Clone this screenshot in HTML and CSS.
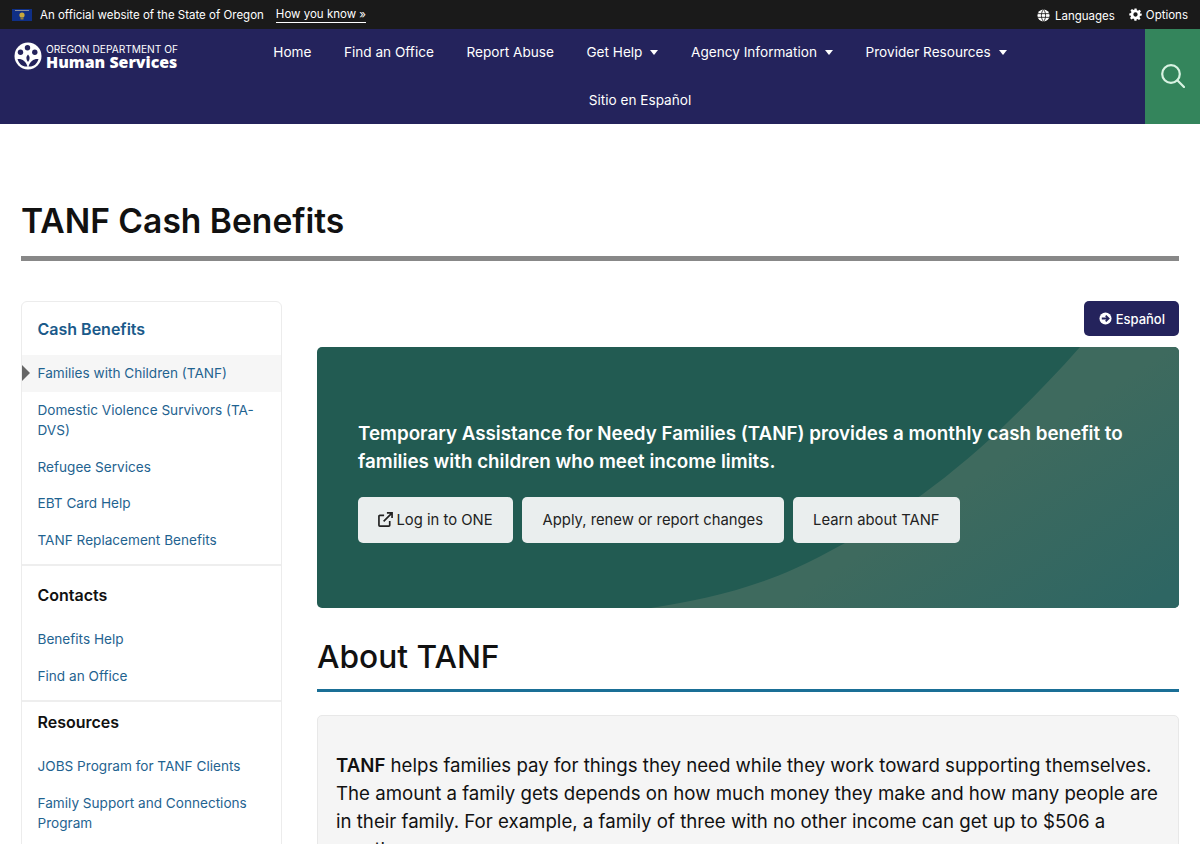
FILE: index.html
```html
<!DOCTYPE html>
<html lang="en">
<head>
  <meta charset="UTF-8">
  <title>TANF Cash Benefits - Oregon Department of Human Services</title>
  <link rel="stylesheet" href="styles.css">
</head>
<body>
  <div class="page">
    <div class="topbar">
      <div class="topbar-left">
        <svg class="flag" width="20" height="12" viewBox="0 0 20 12">
          <rect width="20" height="12" fill="#0f2f86"/>
          <rect x="3" y="1" width="14" height="1" fill="#8a8f9c"/>
          <circle cx="10" cy="6" r="2.6" fill="#c9a93c"/>
          <rect x="8.5" y="8.5" width="3" height="2" fill="#8f7f3c"/>
        </svg>
        <span>An official website of the State of Oregon</span>
        <a class="how-link" href="#">How you know »</a>
      </div>
      <div class="topbar-right">
        <a class="tool-link lang-link" href="#">
          <svg width="13" height="13" viewBox="0 0 14 14">
            <circle cx="7" cy="7" r="6.5" fill="#fff"/>
            <path d="M0.5 5H13.5M0.5 9H13.5M7 0.5C4 3.5 4 10.5 7 13.5M7 0.5C10 3.5 10 10.5 7 13.5" fill="none" stroke="#1a1a1a" stroke-width="0.9"/>
          </svg>
          Languages
        </a>
        <a class="tool-link options-link" href="#">
          <svg width="13" height="13" viewBox="0 0 24 24">
            <path fill="#fff" fill-rule="evenodd" d="M10 1h4l.6 3.200c.7.2 1.400.5 2 .9l2.700-1.900 2.800 2.800-1.900 2.700c.4.6.7 1.300.9 2L23.500 10v4l-3.200.6c-.2.7-.5 1.400-.9 2l1.900 2.700-2.800 2.800-2.700-1.900c-.6.4-1.300.7-2 .9L14 23.500h-4l-.6-3.200c-.7-.2-1.400-.5-2-.9l-2.700 1.900-2.800-2.800 1.900-2.700c-.4-.6-.7-1.300-.9-2L.5 14v-4l3.200-.6c.2-.7.5-1.400.9-2L2.700 4.700l2.800-2.800 2.700 1.900c.6-.4 1.300-.7 2-.9zM12 8a4 4 0 1 0 0 8 4 4 0 0 0 0-8z"/>
          </svg>
          Options
        </a>
      </div>
    </div>

    <header class="site-header">
      <a class="logo" href="#">
        <svg width="28" height="28" viewBox="0 0 28 28">
          <circle cx="14" cy="14" r="13.500" fill="#fff"/>
          <circle cx="13.500" cy="5.800" r="2.700" fill="#24235c"/>
          <circle cx="6.500" cy="10.300" r="2.700" fill="#24235c"/>
          <circle cx="20.800" cy="10.300" r="2.700" fill="#24235c"/>
          <path d="M14 12.500c2.200 2 2.200 5 0 7.500-2.200-2.500-2.200-5.500 0-7.500z" fill="#24235c"/>
          <path d="M3.500 17c4.500-.5 8.500 2 10 7.500-4.500.5-8.500-2-10-7.500zM24.500 17c-4.500-.5-8.500 2-10 7.500 4.500.5 8.500-2 10-7.500z" fill="#24235c"/>
        </svg>
        <span class="logo-text">
          <span class="logo-top">OREGON DEPARTMENT OF</span>
          <span class="logo-name">Human Services</span>
        </span>
      </a>
      <nav class="main-nav">
        <a href="#">Home</a>
        <a href="#">Find an Office</a>
        <a href="#">Report Abuse</a>
        <a href="#">Get Help <i class="caret"></i></a>
        <a href="#">Agency Information <i class="caret"></i></a>
        <a href="#">Provider Resources <i class="caret"></i></a>
        <a href="#">Sitio en Español</a>
      </nav>
      <a class="search-btn" href="#" aria-label="Search">
        <svg width="24" height="24" viewBox="0 0 24 24" fill="none" stroke="#d8f3e2" stroke-width="2.200">
          <circle cx="10" cy="10" r="8.800"/>
          <path d="M16.300 16.300L23 23" stroke-linecap="round"/>
        </svg>
      </a>
    </header>

    <div class="title-wrap">
      <h1>TANF Cash Benefits</h1>
    </div>

    <div class="columns">
      <aside class="sidebar">
        <h2 class="side-head first">Cash Benefits</h2>
        <ul>
          <li class="active"><a href="#">Families with Children (TANF)</a></li>
          <li><a href="#">Domestic Violence Survivors (TA-DVS)</a></li>
          <li><a href="#">Refugee Services</a></li>
          <li><a href="#">EBT Card Help</a></li>
          <li><a href="#">TANF Replacement Benefits</a></li>
        </ul>
        <h2 class="side-head">Contacts</h2>
        <ul>
          <li><a href="#">Benefits Help</a></li>
          <li><a href="#">Find an Office</a></li>
        </ul>
        <h2 class="side-head tight">Resources</h2>
        <ul>
          <li><a href="#">JOBS Program for TANF Clients</a></li>
          <li><a href="#">Family Support and Connections Program</a></li>
        </ul>
      </aside>

      <main class="content">
        <div class="lang-row">
          <a class="espanol-btn" href="#">
            <svg width="13" height="13" viewBox="0 0 14 14">
              <circle cx="7" cy="7" r="6.500" fill="#fff"/>
              <path d="M3 7H10M7.200 3.800L10.400 7L7.200 10.200" fill="none" stroke="#24235c" stroke-width="1.900"/>
            </svg>
            Español
          </a>
        </div>

        <section class="hero">
          <svg class="hero-shape" viewBox="0 0 862 261" preserveAspectRatio="none">
            <defs>
              <linearGradient id="heroFill" x1="0.2" y1="0.3" x2="1" y2="0.9">
                <stop offset="0.45" stop-color="#3e6a5e"/>
                <stop offset="1" stop-color="#2e6663"/>
              </linearGradient>
            </defs>
            <path d="M763 0C735 32 705 62 673 92C640 122 608 147 575 168C545 187 510 207 477 222C430 243 380 254 334 261H862V0Z" fill="url(#heroFill)"/>
          </svg>
          <div class="hero-inner">
            <p class="hero-lead">Temporary Assistance for Needy Families (TANF) provides a monthly cash benefit to families with children who meet income limits.</p>
            <div class="hero-buttons">
              <a class="hero-btn login-btn" href="#">
                <svg width="15" height="15" viewBox="0 0 16 16" fill="none" stroke="#222" stroke-width="1.800">
                  <path d="M12.500 9.500V14a1 1 0 0 1-1 1H2a1 1 0 0 1-1-1V4.500a1 1 0 0 1 1-1h4.500"/>
                  <path d="M6 10L14.500 1.500M9.500 1H15V6.500"/>
                </svg>
                Log in to ONE
              </a>
              <a class="hero-btn" href="#">Apply, renew or report changes</a>
              <a class="hero-btn" href="#">Learn about TANF</a>
            </div>
          </div>
        </section>

        <h2 class="section-title">About TANF</h2>

        <div class="about-box">
          <p><strong>TANF</strong> helps families pay for things they need while they work toward supporting themselves. The amount a family gets depends on how much money they make and how many people are in their family. For example, a family of three with no other income can get up to $506 a month.</p>
        </div>
      </main>
    </div>
  </div>
</body>
</html>
```

FILE: styles.css
```css
* {
  box-sizing: border-box;
  margin: 0;
  padding: 0;
}

body {
  font-family: "Inter", "Liberation Sans", sans-serif;
  color: #111;
  background: #fff;
}

a {
  text-decoration: none;
  color: inherit;
}

.page {
  height: 844px;
  overflow: hidden;
}

.topbar {
  height: 29px;
  background: #1a1a1a;
  color: #fff;
  font-size: 11.5px;
  display: flex;
  justify-content: space-between;
  align-items: center;
  padding: 0 12px;
}

.topbar-left {
  display: flex;
  align-items: center;
}

.flag {
  margin-right: 8px;
}

.how-link {
  margin-left: 12px;
  padding-bottom: 1px;
  border-bottom: 1px solid #fff;
}

.topbar-right {
  display: flex;
  align-items: center;
  gap: 14px;
}

.tool-link {
  display: flex;
  align-items: center;
  gap: 5px;
}

.lang-link {
  padding-top: 2px;
}

.options-link {
  gap: 4px;
}

.site-header {
  height: 95px;
  background: #24235c;
  color: #fff;
  display: flex;
  align-items: flex-start;
}

.logo {
  width: 195px;
  flex: none;
  display: flex;
  gap: 4px;
  padding: 13px 0 0 14px;
}

.logo-text {
  display: flex;
  flex-direction: column;
  padding-top: 2px;
}

.logo-top {
  font-size: 10.2px;
  line-height: 11px;
  white-space: nowrap;
}

.logo-name {
  font-family: "Open Sans", sans-serif;
  font-weight: 800;
  font-size: 15.9px;
  line-height: 14px;
  white-space: nowrap;
}

.main-nav {
  width: 890px;
  flex: none;
  display: flex;
  flex-wrap: wrap;
  justify-content: center;
  font-size: 13.6px;
}

.main-nav a {
  height: 48px;
  padding: 0 16.300px 2px;
  display: flex;
  align-items: center;
  gap: 7px;
}

.caret {
  margin-left: 1px;
  border-left: 4.800px solid transparent;
  border-right: 4.800px solid transparent;
  border-top: 5px solid #fff;
}

.search-btn {
  margin-left: auto;
  width: 55px;
  height: 95px;
  padding-bottom: 2px;
  background: #34855c;
  display: flex;
  align-items: center;
  justify-content: center;
}

.title-wrap {
  margin: 0 21px;
  padding-top: 75px;
  height: 137px;
  border-bottom: 5px solid #888;
}

h1 {
  font-size: 33.6px;
  line-height: 44px;
  font-weight: 600;
}

.columns {
  display: flex;
  align-items: flex-start;
  gap: 35px;
  padding: 40px 21px 0;
}

.sidebar {
  width: 261px;
  flex: none;
  border: 1px solid #ececec;
  border-radius: 6px;
}

.sidebar ul {
  list-style: none;
  padding-bottom: 6px;
  border-bottom: 2px solid #eee;
}

.side-head {
  font-size: 16px;
  font-weight: 600;
  line-height: 24px;
  padding: 17px 16px 14px 15.500px;
}

.side-head.first {
  color: #1a5a8a;
  padding-top: 15px;
}

.side-head.tight {
  padding-top: 8px;
}

.sidebar li a {
  display: block;
  padding: 8px 15.500px;
  font-size: 13.6px;
  line-height: 20.500px;
  color: #1f6390;
}

.sidebar li.active {
  position: relative;
  background: #f6f6f6;
}

.sidebar li.active::before {
  content: "";
  position: absolute;
  left: 0;
  top: 10px;
  border-left: 8px solid #666;
  border-top: 8px solid transparent;
  border-bottom: 8px solid transparent;
}

.content {
  flex: 1;
  min-width: 0;
}

.lang-row {
  display: flex;
  justify-content: flex-end;
  margin-bottom: 11px;
}

.espanol-btn {
  height: 35px;
  padding: 0 14px 0 15px;
  background: #24235c;
  color: #fff;
  border-radius: 5px;
  font-size: 13px;
  font-weight: 500;
  display: flex;
  align-items: center;
  gap: 3.500px;
}

.hero {
  position: relative;
  height: 261px;
  background: #225b52;
  border-radius: 5px;
  overflow: hidden;
}

.hero-shape {
  position: absolute;
  inset: 0;
  width: 100%;
  height: 100%;
}

.hero-inner {
  position: relative;
  padding: 73px 41px 0;
}

.hero-lead {
  color: #fff;
  font-size: 18.8px;
  font-weight: 600;
  line-height: 28px;
  margin-bottom: 21px;
}

.hero-buttons {
  display: flex;
  gap: 9px;
}

.hero-btn {
  height: 46px;
  padding: 0 20.500px 1px;
  background: #eaeeee;
  color: #222;
  border-radius: 5px;
  font-size: 14.8px;
  font-weight: 400;
  display: flex;
  align-items: center;
  gap: 4px;
}

.login-btn {
  padding-left: 20px;
  gap: 3.500px;
}

.section-title {
  margin-top: 27px;
  padding-bottom: 10px;
  font-size: 31.7px;
  line-height: 44px;
  font-weight: 500;
  border-bottom: 3px solid #1a6f96;
}

.about-box {
  margin-top: 23px;
  padding: 35px 10px 36px 18px;
  background: #f5f5f5;
  border: 1px solid #e8e8e8;
  border-radius: 5px;
  font-size: 18.65px;
  line-height: 28px;
}

.about-box strong {
  font-weight: 600;
}
```
